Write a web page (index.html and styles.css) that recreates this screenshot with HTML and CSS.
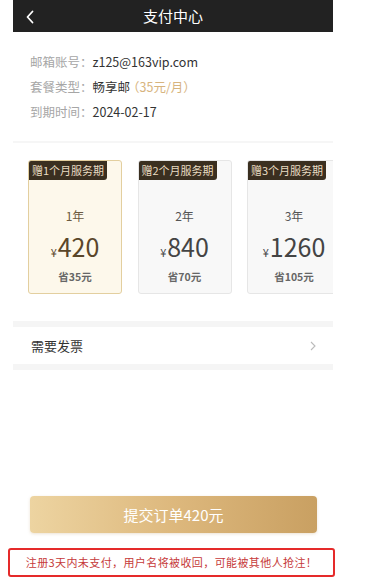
FILE: index.html
```html
<!DOCTYPE html>
<html lang="zh-CN">
<head>
<meta charset="utf-8">
<title>支付中心</title>
<link rel="stylesheet" href="styles.css">
</head>
<body>
<div class="page">
  <header class="topbar">
    <svg class="back" width="10" height="14" viewBox="0 0 10 14"><path d="M7.5 1.5 L2.5 7 L7.5 12.5" fill="none" stroke="#fff" stroke-width="1.8" stroke-linecap="round" stroke-linejoin="round"/></svg>
    <h1 class="title">支付中心</h1>
  </header>

  <section class="info">
    <div class="info-line"><span class="label">邮箱账号：</span><span class="value">z125@163vip.com</span></div>
    <div class="info-line"><span class="label">套餐类型：</span><span class="value">畅享邮</span><span class="accent">（35元/月）</span></div>
    <div class="info-line"><span class="label">到期时间：</span><span class="value">2024-02-17</span></div>
  </section>

  <div class="divider"></div>

  <div class="plans">
    <div class="plan plan-active">
      <div class="badge">赠1个月服务期</div>
      <div class="years">1年</div>
      <div class="price"><span class="yen">¥</span><span class="amount">420</span></div>
      <div class="save">省35元</div>
    </div>
    <div class="plan">
      <div class="badge">赠2个月服务期</div>
      <div class="years">2年</div>
      <div class="price"><span class="yen">¥</span><span class="amount">840</span></div>
      <div class="save">省70元</div>
    </div>
    <div class="plan">
      <div class="badge">赠3个月服务期</div>
      <div class="years">3年</div>
      <div class="price"><span class="yen">¥</span><span class="amount">1260</span></div>
      <div class="save">省105元</div>
    </div>
  </div>

  <div class="invoice">
    <span class="invoice-text">需要发票</span>
    <svg class="chev" width="6" height="10" viewBox="0 0 6 10"><path d="M1 1 L5 5 L1 9" fill="none" stroke="#bbb" stroke-width="1.1"/></svg>
  </div>

  <button class="submit">提交订单420元</button>

  <div class="notice">注册3天内未支付，用户名将被收回，可能被其他人抢注！</div>
</div>
</body>
</html>
```

FILE: styles.css
```css
* { box-sizing: border-box; }
html, body { margin: 0; padding: 0; background: #fff; }
body {
  width: 370px;
  height: 584px;
  overflow: hidden;
  font-family: "Noto Sans CJK SC", "Noto Sans", sans-serif;
}
.page {
  width: 320px;
  margin-left: 13px;
  display: flex;
  flex-direction: column;
}
.topbar {
  height: 32px;
  background: #222;
  display: flex;
  align-items: center;
  justify-content: center;
  position: relative;
}
.back {
  position: absolute;
  left: 12px;
  top: 10px;
}
.title {
  margin: 0;
  color: #fff;
  font-size: 15px;
  font-weight: 400;
  line-height: 32px;
}
.info {
  padding: 17px 0 17px 17px;
  font-size: 12.5px;
}
.info-line {
  line-height: 25px;
  height: 25px;
  white-space: nowrap;
}
.label { color: #a6a6a6; }
.value { color: #333; }
.accent { color: #d7b47e; margin-left: -3px; }
.divider {
  height: 2px;
  background: #f6f6f6;
}
.plans {
  margin-top: 17px;
  padding-left: 15px;
  display: flex;
  gap: 15.5px;
  overflow: hidden;
}
.plan {
  flex: 0 0 94px;
  height: 134px;
  border: 1px solid #e6e6e6;
  border-radius: 3px;
  background: #f8f8f8;
  display: flex;
  flex-direction: column;
  align-items: center;
  overflow: hidden;
}
.plan-active {
  background: #fdf8eb;
  border-color: #e3cf9f;
}
.badge {
  align-self: flex-start;
  height: 20px;
  line-height: 20px;
  padding: 0 3px 0 4px;
  margin: -1px 0 0 -1px;
  background: #3a2f20;
  color: #e9dcc2;
  font-size: 11px;
  border-radius: 0 0 3px 0;
  white-space: nowrap;
}
.years {
  margin-top: 28px;
  line-height: 16px;
  font-size: 12px;
  color: #555;
}
.price {
  margin-top: 7px;
  line-height: 30px;
  height: 30px;
  color: #444;
  display: flex;
  align-items: baseline;
}
.plan-active .price { color: #5a4629; }
.plan-active .years { color: #6b5a40; }
.yen { font-size: 11px; margin-right: 1px; }
.amount { font-size: 25px; }
.save {
  margin-top: 8px;
  line-height: 16px;
  font-size: 10.5px;
  font-weight: 700;
  color: #666;
}
.invoice {
  margin-top: 27px;
  height: 49px;
  border-top: 6px solid #f5f5f5;
  border-bottom: 6px solid #f5f5f5;
  display: flex;
  align-items: center;
  justify-content: space-between;
  padding: 0 17px 0 18px;
}
.invoice-text {
  font-size: 13px;
  color: #333;
}
.submit {
  margin: 126px 0 0 17px;
  width: 287px;
  height: 37px;
  border: none;
  border-radius: 4px;
  background: linear-gradient(90deg, #edd4a1 0%, #ddb87d 50%, #c9a062 100%);
  box-shadow: 0 1px 3px rgba(180, 140, 80, 0.25);
  color: #fff;
  font-family: inherit;
  font-size: 15px;
  padding: 0;
}
.notice {
  margin: 15px 0 0 -5px;
  width: 327px;
  height: 29px;
  border: 2px solid #e52a2a;
  border-radius: 3px;
  color: #c63a3a;
  font-size: 11px;
  line-height: 25px;
  text-align: center;
  white-space: nowrap;
  letter-spacing: 0.4px;
}
```
